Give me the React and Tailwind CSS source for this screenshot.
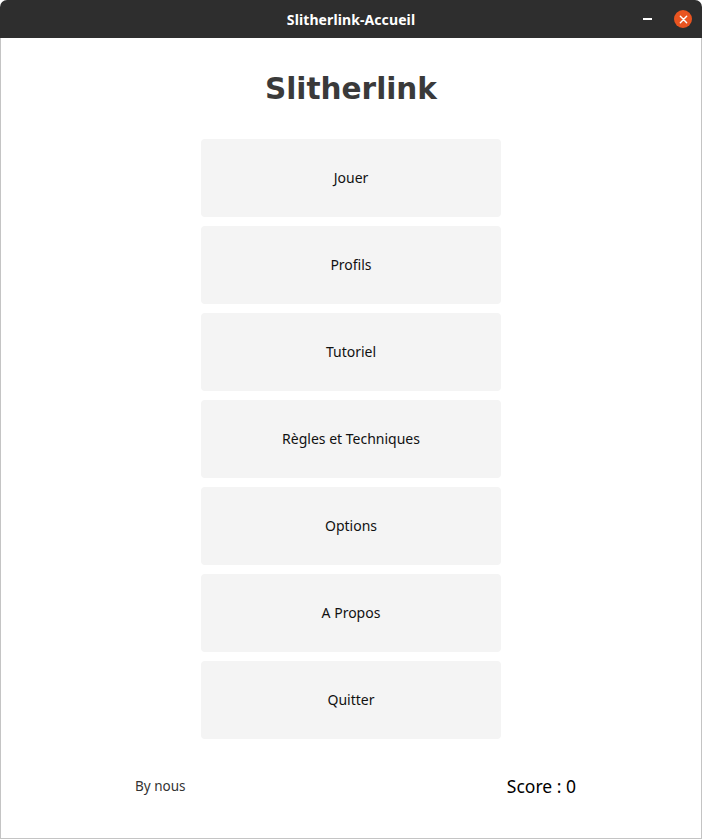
const items = [
  "Jouer",
  "Profils",
  "Tutoriel",
  "Règles et Techniques",
  "Options",
  "A Propos",
  "Quitter",
];

const App = () => {
  return (
    <div className="h-[839px] w-[702px] flex flex-col bg-white overflow-hidden" style={{ fontFamily: "'Noto Sans', 'Open Sans', sans-serif" }}>
      {/* Title bar */}
      <div className="relative h-[38px] shrink-0 bg-[#2e2e2e] rounded-t-[7px] flex items-center justify-center">
        <span className="text-white text-[14px] font-bold tracking-[0.1px]">Slitherlink-Accueil</span>
        <div className="absolute right-[10px] top-0 h-full flex items-center gap-[22px]">
          <div className="w-[9px] h-[1.5px] bg-white" />
          <div className="w-[18px] h-[18px] rounded-full bg-[#e95420] flex items-center justify-center">
            <svg width="9" height="9" viewBox="0 0 10 10">
              <path d="M1.5 1.5 L8.5 8.5 M8.5 1.5 L1.5 8.5" stroke="white" strokeWidth="1.6" strokeLinecap="round" />
            </svg>
          </div>
        </div>
      </div>

      {/* Body */}
      <div className="flex-1 flex flex-col items-center border-x border-b border-[#c4c4c4]">
        <h1
          className="mt-[33px] text-[29.5px] leading-[36px] font-bold text-[#3a3a3a]"
          style={{ fontFamily: "'DejaVu Sans', sans-serif" }}
        >
          Slitherlink
        </h1>

        <div className="mt-[32px] flex flex-col gap-[9px]">
          {items.map((label) => (
            <button
              key={label}
              className="w-[300px] h-[78px] pb-[2px] rounded-[4px] bg-[#f4f4f4] text-[14px] text-[#111] flex items-center justify-center"
            >
              {label}
            </button>
          ))}
        </div>

        <div className="w-full mt-[34px] flex items-center justify-between pl-[134px] pr-[125px]">
          <span className="text-[13.5px] text-[#333]">By nous</span>
          <span className="text-[17.5px] text-black">Score : 0</span>
        </div>
      </div>
    </div>
  );
};

export default App;
